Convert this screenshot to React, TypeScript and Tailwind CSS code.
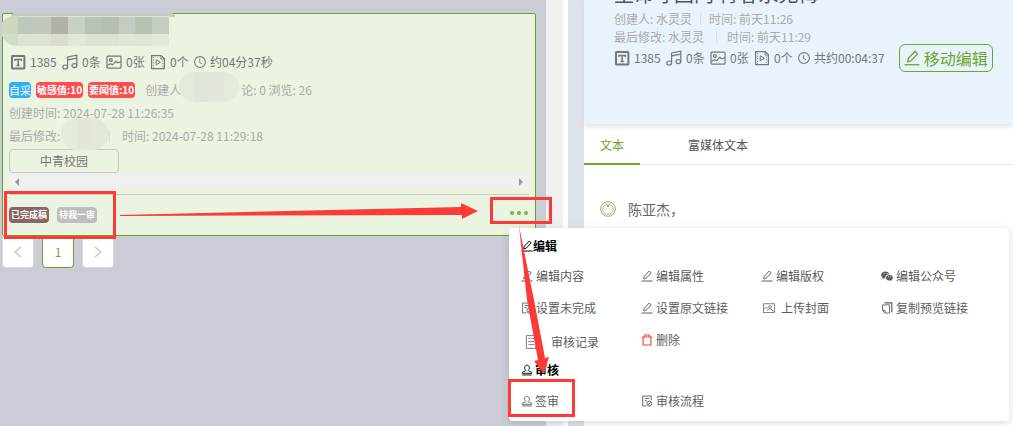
import type { ReactNode } from "react";

type IconProps = { className?: string };

const svgBase = {
  viewBox: "0 0 16 16",
  fill: "none",
  stroke: "currentColor",
  strokeWidth: 1.2,
  "aria-hidden": true,
} as const;

const PenIcon = ({ className = "size-3" }: IconProps) => (
  <svg {...svgBase} className={`shrink-0 ${className}`}>
    <path d="M.5 14.7h15" strokeWidth="1.3" />
    <path d="M3.6 11.9l.8-3.600 6.600-7 2.600 2.600-6.600 7z" strokeWidth="1.3" strokeLinejoin="round" />
  </svg>
);

const TextIcon = ({ className = "size-4" }: IconProps) => (
  <svg {...svgBase} className={`shrink-0 ${className}`}>
    <rect x="2" y="2" width="12.4" height="12.4" rx="0.5" strokeWidth="2" />
    <path d="M5 7V5.500h6.400V7M8.200 5.500v5.700M6.600 11.400h3.200" strokeWidth="1.5" />
  </svg>
);

const MusicIcon = ({ className = "size-4" }: IconProps) => (
  <svg {...svgBase} className={`shrink-0 ${className}`}>
    <ellipse cx="3.2" cy="13" rx="2.4" ry="2" />
    <ellipse cx="12.4" cy="11.6" rx="2.4" ry="2" />
    <path d="M5.6 13V3L14.8 1.2v10.4M5.6 5.8l9.2-1.6" />
  </svg>
);

const ImageIcon = ({ className = "size-4" }: IconProps) => (
  <svg {...svgBase} className={`shrink-0 ${className}`}>
    <rect x="1" y="2.2" width="14" height="12" rx="1" />
    <circle cx="4.8" cy="6" r="1.4" />
    <path d="M1.4 11.6l3-2 2.2 1.2 3.2-3.6 2 1.6 3-1" />
  </svg>
);

const VideoIcon = ({ className = "size-4" }: IconProps) => (
  <svg {...svgBase} className={`shrink-0 ${className}`}>
    <path d="M1.6 1.6h9.6l3.2 3.2v9.8H1.6z" />
    <path d="M11 1.6V5h3.4M6.2 5.8v5l4.2-2.5z" strokeWidth="1" />
    <path d="M3.6 3v11M12.6 6.6v7.6" strokeWidth="1" strokeDasharray="1 1.6" />
  </svg>
);

const ClockIcon = ({ className = "size-3" }: IconProps) => (
  <svg {...svgBase} className={`shrink-0 ${className}`}>
    <circle cx="8" cy="8" r="7.2" strokeWidth="1.4" />
    <path d="M7.6 3.8v4.8l3 1.8" strokeWidth="1.3" />
  </svg>
);

const StampIcon = ({ className = "size-3" }: IconProps) => (
  <svg {...svgBase} className={`shrink-0 ${className}`}>
    <path d="M6.400 8.600C3.800 6.400 4.600 1.600 8 1.600s4.200 4.800 1.600 7c.4 1 1.200 1.400 2.800 1.600 1.600.2 2 .8 2 2.200H1.600c0-1.400.4-2 2-2.200 1.600-.2 2.400-.6 2.800-1.600zM1.600 14.600h12.800" />
  </svg>
);

const FileCheckIcon = ({ className = "size-3" }: IconProps) => (
  <svg {...svgBase} className={`shrink-0 ${className}`}>
    <path d="M7 14.600H2.200V1.400h11.400V7M4.800 4.600h6M4.800 7.600h3" />
    <circle cx="11" cy="11.600" r="3.200" />
    <path d="M9.400 13l3.400-3" />
  </svg>
);

const RecordIcon = ({ className = "size-4" }: IconProps) => (
  <svg {...svgBase} className={`shrink-0 ${className}`}>
    <path d="M1.400 1.600H11v12.800H1.400zM11 4h3.400v8.600c0 1-.6 1.800-1.800 1.800H10M3.400 4l1 1 1-1.400M6.400 4.600h3M3.400 7.600h6M3.400 10.600h6" strokeWidth="0.8" />
  </svg>
);

const PictureIcon = ({ className = "size-3" }: IconProps) => (
  <svg {...svgBase} className={`shrink-0 ${className}`}>
    <rect x="0.8" y="2.4" width="14.400" height="11.600" strokeWidth="1" />
    <circle cx="9.400" cy="6.600" r="1.800" strokeWidth="1" />
    <path d="M1.400 9.600l3-2.600 2.600 2M6 11.600c.6-3.400 6-3.400 7 .4M11 9.800l3 3" strokeWidth="1" />
  </svg>
);

const CopyIcon = ({ className = "size-3" }: IconProps) => (
  <svg {...svgBase} className={`shrink-0 ${className}`}>
    <path d="M4.600 1.200h9.800v12.400" strokeWidth="1.6" />
    <path d="M11.400 3.800v11H5.400L2 11.400V3.800zM2.200 11.400h3.200v3.200" />
  </svg>
);

const TrashIcon = ({ className = "size-3" }: IconProps) => (
  <svg {...svgBase} className={`shrink-0 ${className}`}>
    <path d="M.8 4h14.400M5 3.800V1.400h6v2.400M2.800 4v10.600h10.400V4" strokeWidth="1.500" />
  </svg>
);

const WechatIcon = ({ className = "size-3" }: IconProps) => (
  <svg viewBox="0 0 16 16" fill="currentColor" aria-hidden className={`shrink-0 ${className}`}>
    <path d="M6 2C2.700 2 .2 4 .2 6.600c0 1.500.8 2.800 2.100 3.600l-.5 1.700 2-1c.7.2 1.400.3 2 .3C5.200 8 7.600 5.700 11.300 5.800 10.700 3.600 8.500 2 6 2z" />
    <path d="M15.900 10.200c0-2-2-3.700-4.600-3.700s-4.700 1.700-4.700 3.800 2.100 3.800 4.700 3.800c.5 0 1.100-.1 1.600-.3l1.600.9-.4-1.500c1.100-.7 1.800-1.800 1.800-3z" />
    <path d="M4 4.700h.1M8 4.700h.1M9.800 9.200h.1M12.800 9.200h.1" stroke="white" strokeWidth="1.300" strokeLinecap="round" />
  </svg>
);

function Stats({ duration }: { duration: string }) {
  return (
    <div className="flex h-4 items-center whitespace-nowrap text-[#777]">
      <TextIcon />
      <span className="ml-1 w-8">1385</span>
      <MusicIcon />
      <span className="ml-1 w-6">0条</span>
      <ImageIcon />
      <span className="ml-1 w-6">0张</span>
      <VideoIcon />
      <span className="ml-1 w-6">0个</span>
      <ClockIcon />
      <span className="ml-1">{duration}</span>
    </div>
  );
}

const Pixels = ({ className, cells }: { className: string; cells: string[] }) => (
  <div aria-hidden className={`absolute flex overflow-hidden ${className}`}>
    {cells.map((c, i) => (
      <i key={i} className={`flex-1 ${c}`} />
    ))}
  </div>
);

function ArticleCard() {
  return (
    <article className="relative ml-0.5 mr-2.5 rounded-xs border border-[#6a9f2c] bg-[#eaf4e0] px-1.5 text-xs text-[#aaa]">
      <Pixels className="-top-px left-2 h-1 w-41 rounded-t" cells={["bg-[#c5cbc8]"]} />
      <Pixels className="-left-0.5 top-0.5 h-7.5 w-42 rounded-bl-2xl rounded-tl-xl" cells={["bg-[#d3dcc4]", "bg-[#dbe4d3]", "bg-[#dbe4d3]", "bg-[#d8dece]", "bg-[#dfe8d6]", "bg-[#dbe4d3]", "bg-[#dbe4d3]", "bg-[#dfe6d7]", "bg-[#dde6d4]", "bg-[#e0e9d8]"]} />
      <Pixels className="-left-0.5 top-0.75 h-4.25 w-42 rounded-tl-xl" cells={["bg-[#cdd6bf]", "bg-[#bec8ba]", "bg-[#c0c8bc]", "bg-[#b0b1a9]", "bg-[#c8d0c3]", "bg-[#b8c3b6]", "bg-[#b5c0b3]", "bg-[#c4ccc1]", "bg-[#b8c2b3]", "bg-[#c4cdbf]"]} />
      <div className="pl-px pt-10">
        <Stats duration="约04分37秒" />
      </div>
      <div className="mt-3 flex h-4 items-center whitespace-nowrap">
        <span className="rounded bg-[#2db0f5] text-[11px] leading-4 text-white">自采</span>
        <span className="ml-1.25 rounded bg-[#ff4d4f] px-px text-[10px] font-bold leading-4 text-white">敏感值:10</span>
        <span className="ml-1.25 rounded bg-[#ff4d4f] px-px text-[10px] font-bold leading-4 text-white">要闻值:10</span>
        <span className="ml-2.5 w-24">创建人</span>
        <span>论: 0 浏览: 26</span>
      </div>
      <div className="mt-1.75 leading-4">创建时间: 2024-07-28 11:26:35</div>
      <div className="mt-1.75 flex items-center leading-4">
        <span className="w-25">最后修改:</span>
        <i className="mr-3 h-3 w-px bg-[#d9dfd8]" />
        <span>时间: 2024-07-28 11:29:18</span>
      </div>
      <Pixels className="left-44 top-14.5 h-7.5 w-15 rounded-2xl" cells={["bg-[#e2ead9]", "bg-[#dfe6d7]", "bg-[#e0e7d8]", "bg-[#e3ebda]"]} />
      <Pixels className="left-14.5 top-26 h-8 w-12 rounded-2xl" cells={["bg-[#e3ebda]", "bg-[#e0e7d7]", "bg-[#e2e9d9]"]} />
      <button type="button" className="mt-1.25 block h-6 w-27.5 rounded border border-[#c4c9c0] text-center text-xs text-[#777]">中青校园</button>
      <div className="flex h-4.25 items-center justify-between bg-[#f0f0f0] px-1.5 text-[#999]" aria-hidden>
        <svg viewBox="0 0 4 8" className="h-2 w-1" fill="currentColor"><path d="M4 0v8L0 4z" /></svg>
        <svg viewBox="0 0 4 8" className="h-2 w-1" fill="currentColor"><path d="M0 0v8l4-4z" /></svg>
      </div>
      <div className="mt-1 flex h-10.25 items-center justify-between border-t border-[#c9cec6]">
        <div className="flex gap-2 text-[9px] font-bold leading-4 text-white">
          <span className="rounded bg-[#8b6464] px-0.5">已完成稿</span>
          <span className="rounded bg-[#bebebe] px-0.5">待我一审</span>
        </div>
        <button type="button" aria-label="更多" className="flex gap-0.75 pb-1 pr-px">
          <i className="size-1 rounded-full bg-[#7db343]" />
          <i className="size-1 rounded-full bg-[#7db343]" />
          <i className="size-1 rounded-full bg-[#7db343]" />
        </button>
      </div>
    </article>
  );
}

const Chevron = ({ d }: { d: string }) => (
  <svg viewBox="0 0 8 12" className="h-3 w-2" fill="none" stroke="#c0c0c0" strokeWidth="1.2" aria-hidden>
    <path d={d} />
  </svg>
);

function Pagination() {
  return (
    <nav aria-label="分页" className="ml-0.5 flex gap-2">
      <button type="button" aria-label="上一页" className="flex size-8 items-center justify-center rounded border border-[#d9d9d9] bg-white"><Chevron d="M7 1L1 6l6 5" /></button>
      <button type="button" className="size-8 rounded border border-[#6a9f2c] bg-white text-xs text-[#6fa52c]">1</button>
      <button type="button" aria-label="下一页" className="flex size-8 items-center justify-center rounded border border-[#d9d9d9] bg-white"><Chevron d="M1 1l6 5-6 5" /></button>
    </nav>
  );
}

function Detail() {
  return (
    <main className="min-w-0 flex-1 bg-white text-xs">
      <header className="relative h-31 overflow-hidden bg-[#e8f3fd] pl-7.5 text-[#aaa] shadow-[0_2px_6px_#d9dbe6]">
        <h1 className="-mt-5.5 whitespace-nowrap pb-px text-xl leading-8 text-[#555]">生命守国门 青春永无悔</h1>
        <div className="flex h-4 items-center">
          <span>创建人: 水灵灵</span>
          <i className="mx-2 h-3 w-px bg-[#dcdfe5]" />
          <span>时间: 前天11:26</span>
        </div>
        <div className="mt-0.5 flex h-4 items-center">
          <span>最后修改: 水灵灵</span>
          <i className="ml-3 mr-2.5 h-3 w-px bg-[#dcdfe5]" />
          <span>时间: 前天11:29</span>
        </div>
        <div className="-mt-px flex h-7 items-center gap-3.5">
          <Stats duration="共约00:04:37" />
          <button type="button" className="flex h-7 items-center gap-1 whitespace-nowrap rounded-md border border-[#6fa52c] px-1 text-base text-[#6fa52c]">
            <PenIcon className="size-4" />
            移动编辑
          </button>
        </div>
      </header>
      <nav className="flex h-10.25 gap-8 border-b border-[#e8e8e8]">
        <a href="#text" className="-mb-px flex items-center border-b-2 border-[#6fa52c] px-4 pt-0.5 text-[#6fa52c]">文本</a>
        <a href="#media" className="flex items-center px-4 pt-0.5 text-[#555]">富媒体文本</a>
      </nav>
      <div className="mt-8.5 flex h-5 items-center gap-3 pl-4 text-sm text-[#666]">
        <Seal />
        陈亚杰，
      </div>
    </main>
  );
}

const Seal = () => (
  <svg viewBox="0 0 16 16" className="size-4" fill="none" aria-hidden>
    <circle cx="8" cy="8" r="7.300" stroke="#8dad84" />
    <circle cx="8" cy="8.300" r="5.200" stroke="#cbb47d" />
    <circle cx="8" cy="5" r="1" fill="#6b9b4e" />
  </svg>
);

function Item({ icon, children, className = "gap-0.75" }: { icon: ReactNode; children: ReactNode; className?: string }) {
  return (
    <button type="button" className={`flex h-8 items-center whitespace-nowrap text-[#5c5c5c] ${className}`}>
      {icon}
      {children}
    </button>
  );
}

function Menu() {
  return (
    <section className="absolute left-[509px] right-1 top-57 rounded bg-white pb-1 pl-3 text-xs shadow-[0_2px_8px_#00000026]">
      <h2 className="flex h-8 items-center pt-1 font-bold text-black"><PenIcon />编辑</h2>
      <div className="grid grid-cols-[120px_120px_120px_1fr]">
        <Item icon={<PenIcon />}>编辑内容</Item>
        <Item icon={<PenIcon />}>编辑属性</Item>
        <Item icon={<PenIcon />}>编辑版权</Item>
        <Item icon={<WechatIcon />}>编辑公众号</Item>
        <Item icon={<FileCheckIcon />}>设置未完成</Item>
        <Item icon={<PenIcon />}>设置原文链接</Item>
        <Item icon={<PictureIcon />} className="gap-1.5 pl-0.5">上传封面</Item>
        <Item icon={<CopyIcon />}>复制预览链接</Item>
        <Item icon={<RecordIcon />} className="gap-2.5 pl-1 pt-1">审核记录</Item>
        <Item icon={<TrashIcon className="size-3 text-[#f5443b]" />}>删除</Item>
      </div>
      <h2 className="flex h-7 items-center gap-0.5 font-bold text-black"><StampIcon />审核</h2>
      <div className="grid grid-cols-[120px_120px] pt-px">
        <Item icon={<StampIcon />} className="gap-0.5">签审</Item>
        <Item icon={<FileCheckIcon />}>审核流程</Item>
      </div>
    </section>
  );
}

function Annotations() {
  return (
    <svg aria-hidden className="pointer-events-none absolute left-0 top-0 h-[426px] w-[1013px]" viewBox="0 0 1013 426">
      <g fill="none" stroke="#fd3a36" strokeWidth="3">
        <rect x="5.500" y="192.500" width="109" height="45" />
        <rect x="491.500" y="198.500" width="59" height="24" />
        <rect x="509.500" y="380.500" width="64" height="35" />
      </g>
      <g fill="#fd3a36">
        <path d="M120 215L461 207v-4l17 8-16 8v-4L120 216z" />
        <path d="M519 226L534 300L545 358l4-1-5 17-10-13 4-1L527 300z" />
      </g>
    </svg>
  );
}

export default function App() {
  return (
    <div className="relative flex min-h-screen overflow-hidden bg-white font-['Noto_Sans_CJK_SC',sans-serif]">
      <aside className="w-[546px] shrink-0 bg-[#cbcdd6] pt-3.25">
        <ArticleCard />
        <Pagination />
      </aside>
      <div className="w-4.25 shrink-0 bg-[#f0f0f0]" />
      <div className="w-1.25 shrink-0 bg-white" />
      <div className="w-4 shrink-0 bg-[#dfe2ec]" />
      <Detail />
      <Menu />
      <Annotations />
    </div>
  );
}
